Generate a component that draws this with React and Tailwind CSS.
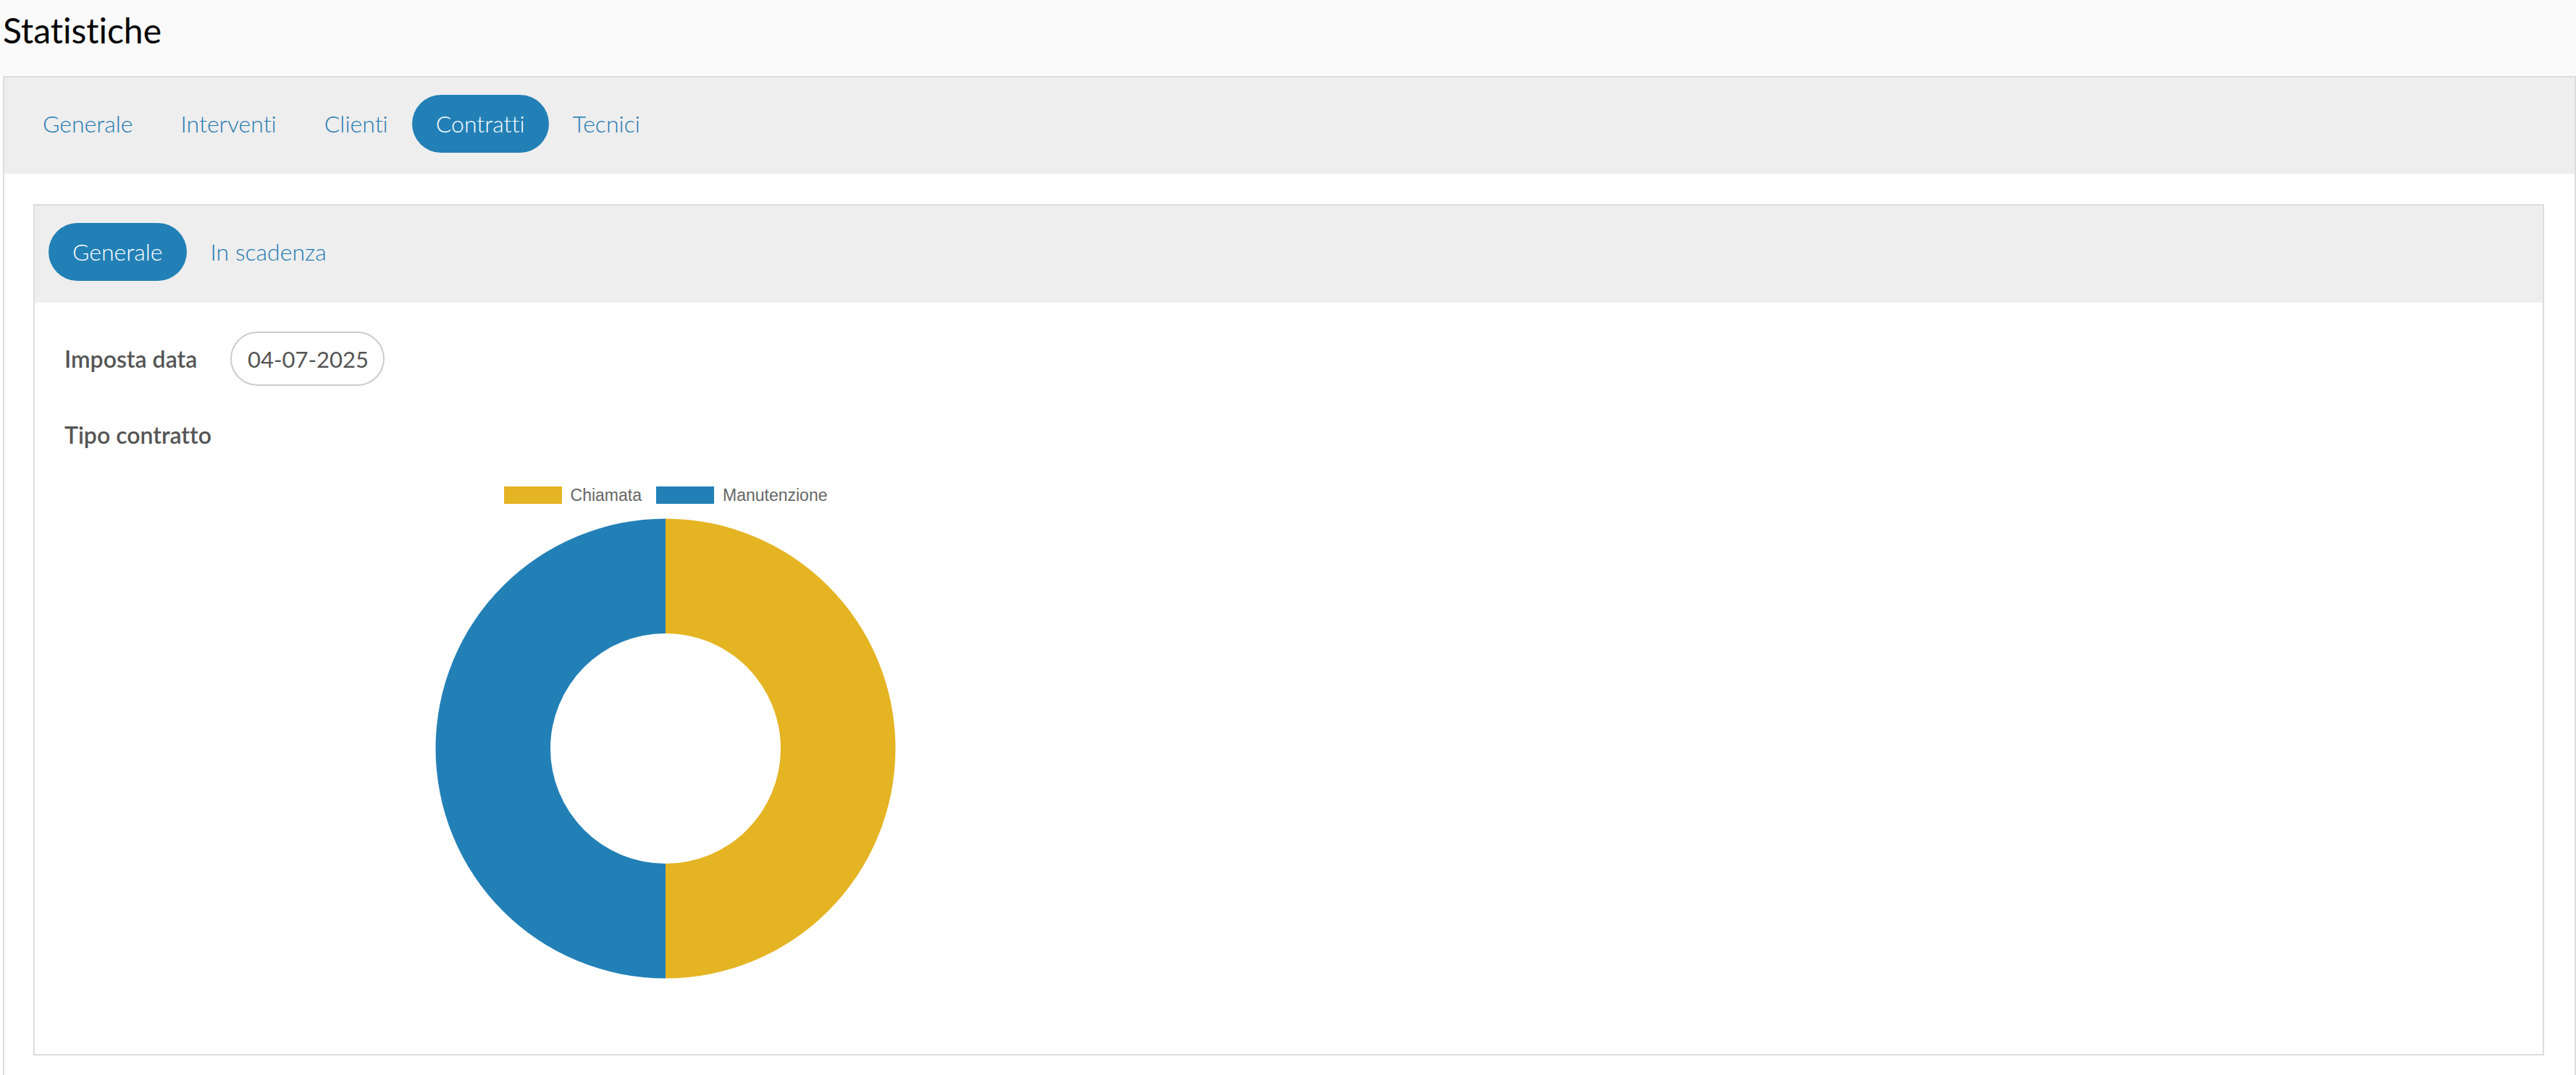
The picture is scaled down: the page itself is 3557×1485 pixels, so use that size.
import React from 'react';

const mainTabs = ['Generale', 'Interventi', 'Clienti', 'Contratti', 'Tecnici'];
const subTabs = ['Generale', 'In scadenza'];

const legend = [
  { label: 'Chiamata', color: 'bg-[#e5b423]' },
  { label: 'Manutenzione', color: 'bg-[#2280b6]' },
];

const Pill = ({ label, active }) => (
  <div
    className={`h-[80px] px-[33px] flex items-center rounded-full text-[32px] font-light leading-none ${
      active ? 'bg-[#2280b6] text-white' : 'text-[#1f7ab3]'
    }`}
  >
    {label}
  </div>
);

const Donut = () => (
  <svg width="636" height="636" viewBox="0 0 636 636">
    {/* Chiamata: right half */}
    <path d="M318 0.5 A317.5 317.5 0 0 1 318 635.5 L318 477 A159 159 0 0 0 318 159 Z" fill="#e5b423" />
    {/* Manutenzione: left half */}
    <path d="M318 0.5 A317.5 317.5 0 0 0 318 635.5 L318 477 A159 159 0 0 1 318 159 Z" fill="#2280b6" />
  </svg>
);

export default function App() {
  return (
    <div className="min-h-screen bg-white font-['Lato','Liberation_Sans',sans-serif] [font-variant-ligatures:none]">
      {/* Header */}
      <div className="h-[105px] bg-[#fafafa] pl-[4px] pt-[18px]">
        <h1 className="text-[48px] leading-none text-black">Statistiche</h1>
      </div>

      {/* Outer panel */}
      <div className="ml-[4px] border-2 border-[#dddddd]">
        <div className="h-[133px] bg-[#eeeeee] pl-[20px] pt-[24px] flex items-start">
          {mainTabs.map((t) => (
            <Pill key={t} label={t} active={t === 'Contratti'} />
          ))}
        </div>

        <div className="pt-[42px] pl-[40px] pr-[42px] pb-[40px]">
          {/* Inner panel */}
          <div className="border-2 border-[#dddddd]">
            <div className="h-[134px] bg-[#eeeeee] pl-[19px] pt-[24px] flex items-start">
              {subTabs.map((t) => (
                <Pill key={t} label={t} active={t === 'Generale'} />
              ))}
            </div>

            <div className="pl-[41px] pt-[40px] pb-[104px]">
              <div className="flex items-center h-[75px]">
                <div className="w-[229px] text-[32px] font-semibold text-[#555555] leading-none">Imposta data</div>
                <input
                  readOnly
                  value="04-07-2025"
                  className="w-[213px] h-[75px] rounded-full border-2 border-[#cccccc] pl-[22px] text-[31px] text-[#555555] outline-none bg-white"
                />
              </div>

              <div className="mt-[45px] text-[32px] leading-[46px] font-semibold text-[#555555]">Tipo contratto</div>

              {/* Chart */}
              <div className="w-[1660px] mt-[48px] flex flex-col items-center">
                <div className="flex items-center h-[24px] font-['Liberation_Sans','Helvetica',sans-serif] text-[23px] text-[#666666]">
                  {legend.map((l, i) => (
                    <div key={l.label} className={`flex items-center ${i > 0 ? 'ml-[20px]' : ''}`}>
                      <span className={`w-[80px] h-[24px] ${l.color}`} />
                      <span className="ml-[12px]">{l.label}</span>
                    </div>
                  ))}
                </div>
                <div className="mt-[20px]">
                  <Donut />
                </div>
              </div>
            </div>
          </div>
        </div>
      </div>
    </div>
  );
}
